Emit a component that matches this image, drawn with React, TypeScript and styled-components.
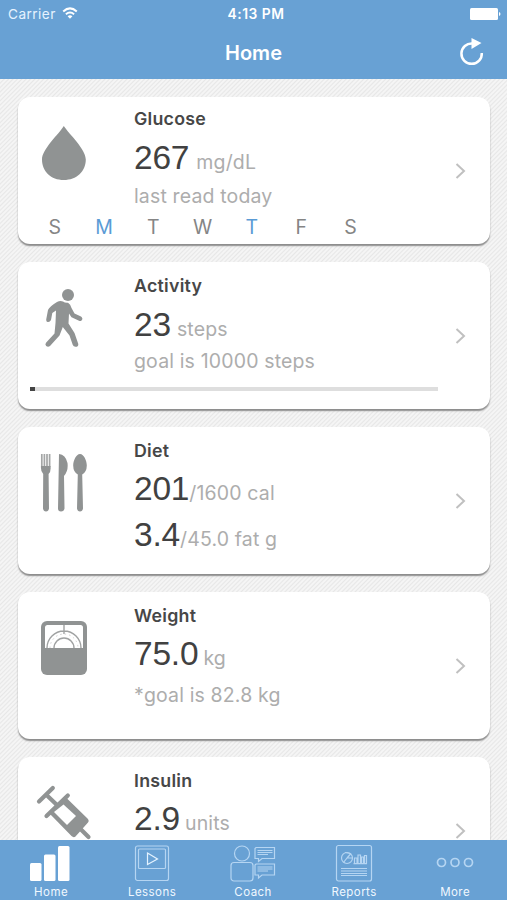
import React from 'react';
import styled, { createGlobalStyle } from 'styled-components';

const GREY = '#909393';
const BLUE = '#68a1d4';

const GlobalStyle = createGlobalStyle`
  * { box-sizing: border-box; }
  body { margin: 0; font-family: Inter, "Liberation Sans", sans-serif; }
`;

const Screen = styled.div`
  display: flex;
  flex-direction: column;
  width: 507px;
  height: 900px;
  overflow: hidden;
  background: #f0f0f0 repeating-linear-gradient(135deg, #e7e7e7 0, #f5f5f5 1.1px, #f5f5f5 2px, #e7e7e7 3.1px);
`;

const Header = styled.header`
  flex: none;
  height: 79px;
  color: #fff;
  background: ${BLUE};
`;

const Bar = styled.div<{ $height: number }>`
  display: grid;
  grid-template-columns: 1fr auto 1fr;
  align-items: center;
  height: ${p => p.$height}px;
`;

const Carrier = styled.div`
  display: flex;
  align-items: center;
  gap: 6px;
  padding-left: 8px;
  font-size: 13.6px;
  letter-spacing: 0.45px;
  color: #e6f3ff;
`;

const Clock = styled.div`
  padding-left: 5px;
  font-size: 13.8px;
  font-weight: 600;
  letter-spacing: 0.5px;
`;

const BarEnd = styled.div<{ $inset: number }>`
  display: flex;
  justify-content: flex-end;
  padding-right: ${p => p.$inset}px;
`;

const PageTitle = styled.h1`
  grid-column: 2;
  margin: 0;
  padding-top: 1px;
  font-size: 20px;
  font-weight: 600;
  line-height: 28px;
`;

const Cards = styled.main`
  flex: 1;
  min-height: 0;
  overflow: hidden;
  display: flex;
  flex-direction: column;
  gap: 18px;
  padding: 18px 18px 0;
`;

const CardBox = styled.section`
  flex: none;
  display: grid;
  grid-template-columns: 116px minmax(0, 1fr) 60px;
  grid-template-rows: 1fr auto;
  width: 471.5px;
  height: 147px;
  border-radius: 12px;
  background: #fff;
  box-shadow: 0 2px 1.5px #8c8c8c;
`;

const IconCell = styled.div`
  padding: 23px 0 0 16px;
  svg { display: block; }
`;

const Chevron = styled.div`
  grid-column: 3;
  grid-row: 1 / 3;
  align-self: center;
  padding: 1px 0 0 25px;
  svg { display: block; }
`;

const Lines = styled.div`
  display: flex;
  flex-direction: column;
  white-space: nowrap;
`;

const Title = styled.h2<{ $top: number }>`
  margin: ${p => p.$top}px 0 0;
  height: 30px;
  font-size: 17.8px;
  line-height: 30px;
  font-weight: 600;
  letter-spacing: 0.25px;
  color: #474747;
`;

const Line = styled.div<{ $top: number }>`
  margin-top: ${p => p.$top}px;
  height: 30px;
  font-size: 19.5px;
  line-height: 30px;
  letter-spacing: 0.15px;
  color: #adadad;
`;

const Value = styled.span<{ $after?: number }>`
  margin-right: ${p => p.$after ?? 0}px;
  font-family: "Liberation Sans", Arial, sans-serif;
  font-size: 33.5px;
  line-height: 0;
  letter-spacing: -0.2px;
  color: #414141;
`;

const Week = styled.div`
  grid-column: 1 / 3;
  display: grid;
  grid-template-columns: repeat(7, 49.3px);
  padding-left: 12px;
  height: 32px;
`;

const Day = styled.span<{ $active?: boolean }>`
  text-align: center;
  font-size: 19.5px;
  line-height: 30px;
  color: ${p => (p.$active ? '#5a9bd5' : '#858585')};
`;

const Track = styled.div`
  grid-column: 1 / 3;
  width: 408px;
  height: 4px;
  margin: 0 0 18px 12px;
  background: #dedede;
`;

const Fill = styled.div`
  width: 5px;
  height: 4px;
  background: #444;
`;

const TabBar = styled.nav`
  flex: none;
  display: grid;
  grid-template-columns: repeat(5, 101px);
  padding-left: 0.6px;
  height: 60px;
  background: ${BLUE};
`;

const Tab = styled.div`
  display: flex;
  flex-direction: column;
  align-items: center;
  padding-top: 4px;
  font-size: 11.5px;
  line-height: 14px;
  letter-spacing: 0.45px;
  color: #f0f8ff;
  svg { display: block; margin-bottom: 3px; }
`;

const Wifi = () => (
  <svg width="16" height="13" viewBox="0 0 16 13" fill="none" stroke="#fff" strokeWidth="2">
    <path d="M1.2 4.4Q8-1.6 14.8 4.4M3.9 7.3Q8 3.8 12.1 7.3" />
    <path d="M8 11.7L5.6 9.3Q8 7.2 10.4 9.3Z" fill="#fff" stroke="none" />
  </svg>
);

const Battery = () => (
  <svg width="31" height="12" viewBox="0 0 31 12" fill="#fff">
    <rect x="0" y="0" width="28" height="12" rx="1.5" />
    <path d="M29 4Q30.5 4.500 30.5 6T29 8Z" />
  </svg>
);

const Refresh = () => (
  <svg width="24" height="28" viewBox="0 0 24 28">
    <path d="M12.500 5.500A10.200 10.200 0 1 0 21.800 15" fill="none" stroke="#fff" strokeWidth="2.500" />
    <path d="M11.500 0L21.500 5L11.500 11Z" fill="#fff" />
  </svg>
);

const Arrow = () => (
  <svg width="13" height="18" viewBox="0 0 13 18" fill="none" stroke="#c0c0c0" strokeWidth="2">
    <path d="M1.500 2L9 9L1.500 16" />
  </svg>
);

const Drop = () => (
  <svg width="60" height="64" viewBox="0 0 60 64" fill={GREY}>
    <path d="M29.800 6C25 14 8 29 8 39.500C8 51.500 17 60 29.800 60S51.800 51.500 51.800 39.500C51.800 29 35 14 29.800 6Z" />
  </svg>
);

const Walker = () => (
  <svg width="60" height="64" viewBox="0 0 60 64" fill={GREY}>
    <circle cx="34" cy="10" r="6" />
    <path d="M23 17Q26 15.500 29 16.500Q31 18 34 17.700Q36.500 19 37.500 23L40.500 28.500L47 31.500Q49.500 33.500 47.500 35.500Q46.500 36.500 44.500 35.500L37.500 32.300L35 28.500L34.500 38.500L40.500 48L44.300 59Q44.500 62 41.500 61.800Q39.500 61.800 38.800 60L35.500 50.500L28.800 42L25.500 50.500L16 61Q14 62.500 12.200 61Q10.700 59.500 12 57.700L20.500 48.500L21.500 38L22 25.500L18.300 28L17 35Q15.800 37.500 13.500 37Q12 36.500 12.200 34.500L14 25Q15.500 21.500 23 17Z" />
  </svg>
);

const Cutlery = () => (
  <svg width="60" height="64" viewBox="0 0 60 64" fill={GREY}>
    <path d="M7.800 4V17M10.400 4V17M13 4V17M15.600 4V17" fill="none" stroke="#a4a6a6" strokeWidth="1.700" />
    <path d="M7 16H16.500Q17.200 21.500 14.600 24L15 58.500Q14.500 61.500 12 61.500T9 58.500L9.200 24Q6.500 21.500 7 16Z" />
    <path d="M25 4Q31.500 4.500 33.500 13Q34.500 21 30 26L30.500 58.500Q30 61.500 27 61.500T24 58.500Z" />
    <path d="M46 4C50 4 52.800 11 52.800 15.500Q52.700 22 48.200 24.500L49 58.500Q48.500 61.500 46 61.500T43 58.500L43.800 24.500Q39.300 22 39.200 15.500C39.200 11 42 4 46 4Z" />
  </svg>
);

const Scale = () => (
  <svg width="60" height="64" viewBox="0 0 60 64">
    <rect x="7" y="6" width="46" height="54" rx="6" fill={GREY} />
    <path d="M13.500 10H46.500Q49 10 49 12.500V33H11V12.500Q11 10 13.500 10Z" fill="#fff" />
    <path d="M13 33A16.800 16.800 0 0 1 47 33M20 33A10 10 0 0 1 40 33M30 10V19" fill="none" stroke="#a0a2a2" strokeWidth="1.400" />
    <path d="M16 33A13.800 13.800 0 0 1 44 33" fill="none" stroke="#d0d0d0" strokeWidth="1" strokeDasharray="1.500 3" />
  </svg>
);

const Syringe = () => (
  <svg width="60" height="64" viewBox="0 0 60 64" fill="none" stroke={GREY} strokeLinecap="round">
    <path d="M5 21.500L18.800 8M12.500 15L23 25M12.500 36L33.800 15.500M46 48.500L54.500 57" strokeWidth="4.200" />
    <path d="M16 34L32.500 18L54 39Q55.500 41 54 42.500L41.500 56.500Q39.500 58 37.500 56Z" fill={GREY} stroke="none" />
    <path d="M20 32L29.500 24.500L42 36L33 45Z" fill="#fff" stroke="none" />
  </svg>
);

const HomeIcon = () => (
  <svg width="42" height="38" viewBox="0 0 42 38" fill="#fff">
    <rect x="0" y="19" width="11.500" height="18" rx="1.500" />
    <rect x="14" y="10.500" width="11.500" height="26.500" rx="1.500" />
    <rect x="28" y="2" width="11.500" height="35" rx="1.500" />
  </svg>
);

const LineIcon = styled.svg.attrs({ fill: 'none', stroke: '#b5d5f2', strokeWidth: 1.2, height: 38 })``;

const LessonsIcon = () => (
  <LineIcon width="36" viewBox="0 0 36 38">
    <rect x="1.500" y="2" width="33" height="34.500" rx="2" />
    <rect x="4.500" y="5" width="27" height="19.500" rx="1" />
    <path d="M13.500 9L23.500 15L13.500 20.500Z" stroke="#e4f3ff" />
  </LineIcon>
);

const CoachIcon = () => (
  <LineIcon width="46" viewBox="0 0 46 38">
    <circle cx="12" cy="9.500" r="7.500" />
    <rect x="1" y="18.500" width="22" height="18.500" rx="3" />
    <path d="M26 3.500H44.500V14.500H32L28.500 17.500V14.500H25V4.500ZM26 20H44.500V31H32L28.500 34V31H25V21Z" />
    <path d="M27.500 6.500H42.500M27.500 8.500H42.500M27.500 10.500H38M27.500 23H42.500M27.500 25H42.500M27.500 27H38" strokeWidth="1" />
  </LineIcon>
);

const ReportsIcon = () => (
  <LineIcon width="38" viewBox="0 0 38 38">
    <rect x="1.500" y="1.500" width="35" height="35.500" rx="2" />
    <circle cx="12" cy="14" r="5.500" />
    <path d="M12 14L16 9.500M12 14H17M12 14L8.500 18.500M10 8.500L15.500 9.500M19.500 19.500V14H22V19.500M23 19.500V11H25.500V19.500M26.500 19.500V13H28.500V19.500M29.500 19.500V11.500H31.500V19.500M18.500 19.700H32" />
    <path d="M6 24.500H32M6 27H32M6 29.500H32M6 31.500H32" />
  </LineIcon>
);

const MoreIcon = () => (
  <LineIcon width="40" viewBox="0 0 40 38">
    <circle cx="6.500" cy="18.500" r="4" strokeWidth="1.700" />
    <circle cx="20" cy="18.500" r="4" strokeWidth="1.700" />
    <circle cx="33.500" cy="18.500" r="4" strokeWidth="1.700" />
  </LineIcon>
);

const week = [
  { day: 'S' },
  { day: 'M', active: true },
  { day: 'T' },
  { day: 'W' },
  { day: 'T', active: true },
  { day: 'F' },
  { day: 'S' },
];

const tabs = [
  { label: 'Home', Icon: HomeIcon },
  { label: 'Lessons', Icon: LessonsIcon },
  { label: 'Coach', Icon: CoachIcon },
  { label: 'Reports', Icon: ReportsIcon },
  { label: 'More', Icon: MoreIcon },
];

interface CardProps {
  icon: React.ReactNode;
  footer?: React.ReactNode;
  children: React.ReactNode;
}

const Card = ({ icon, footer, children }: CardProps) => (
  <CardBox>
    <IconCell>{icon}</IconCell>
    <Lines>{children}</Lines>
    <Chevron><Arrow /></Chevron>
    {footer}
  </CardBox>
);

export default function App() {
  return (
    <Screen>
      <GlobalStyle />
      <Header>
        <Bar $height={27}>
          <Carrier>Carrier <Wifi /></Carrier>
          <Clock>4:13 PM</Clock>
          <BarEnd $inset={6}><Battery /></BarEnd>
        </Bar>
        <Bar $height={50}>
          <PageTitle>Home</PageTitle>
          <BarEnd $inset={23}><Refresh /></BarEnd>
        </Bar>
      </Header>
      <Cards>
        <Card
          icon={<Drop />}
          footer={<Week>{week.map((d, i) => <Day key={i} $active={d.active}>{d.day}</Day>)}</Week>}
        >
          <Title $top={7}>Glucose</Title>
          <Line $top={13}><Value $after={7}>267</Value>mg/dL</Line>
          <Line $top={4}>last read today</Line>
        </Card>
        <Card icon={<Walker />} footer={<Track><Fill /></Track>}>
          <Title $top={9}>Activity</Title>
          <Line $top={13}><Value $after={6}>23</Value>steps</Line>
          <Line $top={2}>goal is 10000 steps</Line>
        </Card>
        <Card icon={<Cutlery />}>
          <Title $top={9}>Diet</Title>
          <Line $top={12}><Value>201</Value>/1600 cal</Line>
          <Line $top={16}><Value>3.4</Value>/45.0 fat g</Line>
        </Card>
        <Card icon={<Scale />}>
          <Title $top={9}>Weight</Title>
          <Line $top={12}><Value $after={5}>75.0</Value>kg</Line>
          <Line $top={7}>*goal is 82.8 kg</Line>
        </Card>
        <Card icon={<Syringe />}>
          <Title $top={9}>Insulin</Title>
          <Line $top={12}><Value $after={5}>2.9</Value>units</Line>
        </Card>
      </Cards>
      <TabBar>
        {tabs.map(({ label, Icon }) => (
          <Tab key={label}><Icon />{label}</Tab>
        ))}
      </TabBar>
    </Screen>
  );
}
